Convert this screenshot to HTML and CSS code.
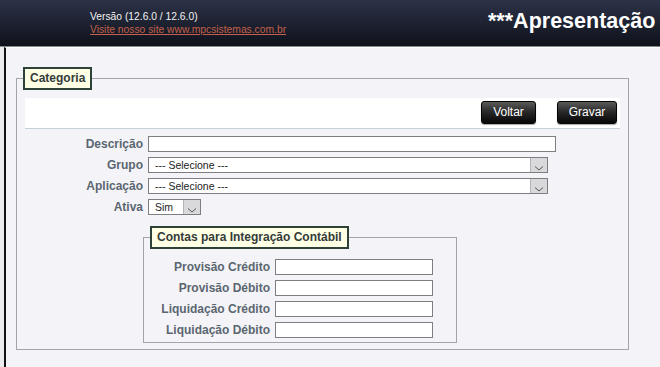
FILE: index.html
```html
<!DOCTYPE html>
<html lang="pt-BR">
<head>
<meta charset="utf-8">
<title>Categoria</title>
<link rel="stylesheet" href="styles.css">
</head>
<body>
<header class="top">
  <div class="info">
    <div class="ver">Versão (12.6.0 / 12.6.0)</div>
    <a class="site" href="#">Visite nosso site www.mpcsistemas.com.br</a>
  </div>
  <div class="title">***Apresentação</div>
</header>
<div class="frame">
  <div class="content">
    <fieldset class="box">
      <legend class="tag">Categoria</legend>
      <div class="toolbar">
        <button class="btn btn-voltar">Voltar</button>
        <button class="btn btn-gravar">Gravar</button>
      </div>
      <div class="form">
        <label class="lbl">Descrição</label>
        <input class="field field-desc" type="text">
        <label class="lbl">Grupo</label>
        <div class="select select-wide"><span class="val">--- Selecione ---</span><span class="arrow"><svg width="16" height="14" viewBox="0 0 16 14"><path d="M4 8.5 L8 12 L12 8.5" fill="none" stroke="#555" stroke-width="1"/></svg></span></div>
        <label class="lbl">Aplicação</label>
        <div class="select select-wide"><span class="val">--- Selecione ---</span><span class="arrow"><svg width="16" height="14" viewBox="0 0 16 14"><path d="M4 8.5 L8 12 L12 8.5" fill="none" stroke="#555" stroke-width="1"/></svg></span></div>
        <label class="lbl">Ativa</label>
        <div class="select select-small"><span class="val">Sim</span><span class="arrow"><svg width="16" height="14" viewBox="0 0 16 14"><path d="M4 8.5 L8 12 L12 8.5" fill="none" stroke="#555" stroke-width="1"/></svg></span></div>
      </div>
      <fieldset class="sub">
        <legend class="tag">Contas para Integração Contábil</legend>
        <div class="subform">
          <label class="lbl">Provisão Crédito</label>
          <input class="field field-sub" type="text">
          <label class="lbl">Provisão Débito</label>
          <input class="field field-sub" type="text">
          <label class="lbl">Liquidação Crédito</label>
          <input class="field field-sub" type="text">
          <label class="lbl">Liquidação Débito</label>
          <input class="field field-sub" type="text">
        </div>
      </fieldset>
    </fieldset>
  </div>
</div>
</body>
</html>
```

FILE: styles.css
```css
html, body {
  margin: 0;
  padding: 0;
}
body {
  background: #ececee;
  font-family: "Liberation Sans", Arial, sans-serif;
  height: 367px;
  overflow: hidden;
}
.top {
  height: 46px;
  background: linear-gradient(#2c3247, #0f121b);
  border-bottom: 1px solid #85878c;
  display: flex;
  align-items: flex-start;
  padding-left: 90px;
  color: #fff;
}
.info {
  width: 398px;
  padding-top: 10px;
  font-size: 10.3px;
  line-height: 13px;
}
.ver {
  color: #f2f2f2;
}
.site {
  color: #c2604b;
  text-decoration: underline;
}
.title {
  padding-top: 9px;
  font-size: 21.5px;
  line-height: 24px;
  font-weight: bold;
  color: #fff;
  white-space: nowrap;
}
.frame {
  margin-left: 4px;
  border-left: 2px solid #111;
  border-top: 1px solid #fff;
  background: #f4f4f8;
  height: 320px;
}
.content {
  padding: 19px 0 0 10px;
}
.box {
  box-sizing: border-box;
  width: 613px;
  margin: 0;
  padding: 8px 8px 6px 8px;
  border: 1px solid #a4a4a8;
  min-width: 0;
}
.tag {
  box-sizing: border-box;
  height: 23px;
  line-height: 19px;
  padding: 0 5px;
  background: #ffffe6;
  border: 2px solid #2e4136;
  font-size: 12px;
  font-weight: bold;
  color: #343c3a;
}
.box > .tag {
  margin-left: -2px;
}
.toolbar {
  height: 27px;
  background: #fff;
  border-bottom: 1px solid #c6d0d8;
  display: flex;
  justify-content: flex-end;
  align-items: flex-start;
  gap: 21px;
  padding: 3px 3px 0 0;
}
.btn {
  box-sizing: border-box;
  height: 23px;
  padding: 0;
  border: 1px solid #050505;
  border-radius: 3px;
  background: linear-gradient(#5a5a5a 0%, #2a2a2a 45%, #060606 100%);
  box-shadow: 0 1px 1px rgba(0,0,0,0.35);
  color: #fff;
  font-family: "Liberation Sans", Arial, sans-serif;
  font-size: 12px;
  line-height: 21px;
}
.btn-voltar { width: 55px; }
.btn-gravar { width: 60px; }
.form {
  margin-top: 7px;
  display: grid;
  grid-template-columns: 118px auto;
  grid-auto-rows: 16px;
  column-gap: 5px;
  row-gap: 5px;
  justify-items: start;
}
.lbl {
  justify-self: end;
  font-size: 12px;
  line-height: 16px;
  font-weight: bold;
  color: #5b6670;
  white-space: nowrap;
}
.field {
  box-sizing: border-box;
  height: 16px;
  margin: 0;
  padding: 0 2px;
  border: 1px solid #7e7e82;
  background: #fff;
  font-size: 11px;
}
.field-desc { width: 408px; }
.field-sub { width: 158px; }
.select {
  box-sizing: border-box;
  height: 16px;
  display: flex;
  border: 1px solid #7e7e82;
  background: #fff;
}
.select-wide { width: 400px; }
.select-small { width: 53px; }
.val {
  flex: 1;
  padding-left: 6px;
  font-size: 10.5px;
  line-height: 14px;
  color: #222;
  white-space: nowrap;
  overflow: hidden;
}
.arrow {
  width: 16px;
  height: 14px;
  background: #d9d9db;
  border-left: 1px solid #b4b4b8;
  display: flex;
}
.sub {
  box-sizing: border-box;
  width: 314px;
  margin: 11px 0 0 118px;
  padding: 10px 6px 4px 6px;
  border: 1px solid #a4a4a8;
  min-width: 0;
}
.sub > .tag {
  margin-left: 0;
}
.subform {
  display: grid;
  grid-template-columns: 120px 158px;
  grid-auto-rows: 16px;
  column-gap: 5px;
  row-gap: 5px;
}
```
